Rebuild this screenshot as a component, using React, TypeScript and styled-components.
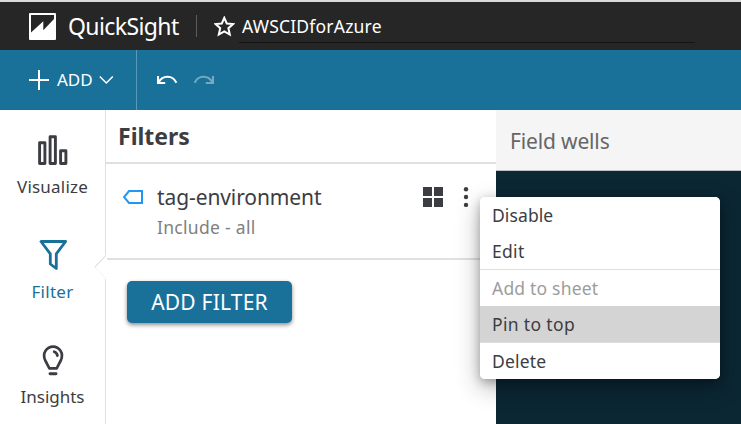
import React from "react";
import styled, { createGlobalStyle } from "styled-components";

const GlobalStyle = createGlobalStyle`
  * { box-sizing: border-box; }
  body { margin: 0; background: #fff; }
  #root { font-family: "Noto Sans", "Open Sans", sans-serif; }
`;

const Page = styled.div`
  width: 741px;
  height: 424px;
  overflow: hidden;
  display: flex;
  flex-direction: column;
  background: #fff;
`;

const Text = styled.span<{ $size: number; $spacing?: number; $color?: string; $weight?: number }>`
  display: block;
  font-size: ${(p) => p.$size}px;
  letter-spacing: ${(p) => p.$spacing ?? 0}px;
  color: ${(p) => p.$color ?? "#3c3d42"};
  font-weight: ${(p) => p.$weight ?? 400};
  line-height: 24px;
  white-space: nowrap;
`;

const Header = styled.header`
  display: flex;
  height: 50px;
  flex: none;
  padding-left: 29px;
  background: #262626;
  border-top: 2px solid #d9dadb;
`;

const Logo = styled.svg`
  margin-top: 11px;
  flex: none;
`;

const Brand = styled.div`
  width: 140px;
  padding: 12px 0 0 12px;
`;

const HeaderRule = styled.div`
  width: 1px;
  height: 22px;
  margin: 13px 17px 0 0;
  background: #5c5c5c;
`;

const Star = styled.svg`
  margin-top: 14px;
  flex: none;
`;

const AnalysisName = styled.div`
  width: 456px;
  height: 41px;
  margin-left: 4px;
  padding: 12px 0 0 3px;
  border-bottom: 1px solid #141414;
`;

const Toolbar = styled.div`
  display: flex;
  height: 60px;
  flex: none;
  background: #19719a;
`;

const AddMenu = styled.div`
  display: flex;
  align-items: center;
  width: 137px;
  padding-left: 29px;
  border-right: 1px solid #5a9ab7;
`;

const AddLabel = styled.div`
  width: 50px;
  padding-left: 8px;
`;

const History = styled.div`
  display: flex;
  align-items: center;
  gap: 15px;
  padding-left: 20px;
`;

const Body = styled.div`
  display: flex;
  flex: 1;
  min-height: 0;
`;

const Nav = styled.nav`
  position: relative;
  width: 106px;
  flex: none;
  border-right: 1px solid #e0e0e0;
`;

const NavItem = styled.div`
  display: flex;
  flex-direction: column;
  align-items: center;
  height: 105px;
  padding-top: 22px;
`;

const NavIcon = styled.svg`
  margin-bottom: 7px;
  flex: none;
`;

const Notch = styled.svg`
  position: absolute;
  left: 94px;
  top: 145px;
`;

const Panel = styled.section`
  width: 390px;
  flex: none;
`;

const PanelTitle = styled.div`
  height: 54px;
  padding: 14px 0 0 12px;
  border-bottom: 2px solid #e0e0e0;
`;

const FilterRow = styled.div`
  display: flex;
  height: 96px;
  border-bottom: 2px solid #e0e0e0;
  padding: 21px 0 0 17px;
`;

const FilterInfo = styled.div`
  width: 279px;
  padding-left: 13px;
`;

const FilterIcon = styled.svg<{ $top: number; $left?: number }>`
  margin: ${(p) => p.$top}px 0 0 ${(p) => p.$left ?? 0}px;
  flex: none;
`;

const FilterDetail = styled.div`
  padding-top: 6px;
`;

const AddFilter = styled.button`
  display: flex;
  align-items: center;
  justify-content: center;
  width: 165px;
  height: 42px;
  margin: 21px 0 0 21px;
  padding: 0;
  border: 0;
  border-radius: 5px;
  background: #19719a;
  font-family: inherit;
  box-shadow: 0 2px 4px rgba(0, 0, 0, 0.45);
`;

const Canvas = styled.main`
  flex: 1;
  background: #0b2733;
`;

const FieldWells = styled.div`
  height: 61px;
  padding: 19px 0 0 14px;
  background: #f5f5f5;
  border-bottom: 1px solid #bfc2c3;
`;

const Menu = styled.div`
  position: absolute;
  left: 480px;
  top: 197px;
  width: 240px;
  height: 182px;
  overflow: hidden;
  border-radius: 5px;
  background: #fff;
`;

const MenuShadow = styled.div`
  position: absolute;
  left: 480px;
  top: 197px;
  width: 240px;
  height: 182px;
  border-radius: 5px;
  box-shadow: 0 8px 24px rgba(0, 0, 0, 0.3), 0 3px 10px rgba(0, 0, 0, 0.25);
`;

const MenuItem = styled.div<{ $height: number; $active?: boolean; $ruled?: boolean }>`
  display: flex;
  align-items: center;
  height: ${(p) => p.$height}px;
  padding-left: 12px;
  background: ${(p) => (p.$active ? "#d4d4d4" : "#fff")};
  border-bottom: ${(p) => (p.$ruled ? "1px solid #dedede" : "0")};
`;

const MENU = [
  { label: "Disable", height: 36, spacing: 0.1 },
  { label: "Edit", height: 37, ruled: true, spacing: 0.3 },
  { label: "Add to sheet", height: 36, disabled: true, spacing: 0.2 },
  { label: "Pin to top", height: 37, active: true, ruled: true, spacing: 0.35 },
  { label: "Delete", height: 36, spacing: 0.2 },
];

export default function App() {
  return (
    <Page>
      <GlobalStyle />
      <Header>
        <Logo width="27" height="27" viewBox="0 0 27 27">
          <rect width="27" height="27" rx="1" fill="#fff" />
          <path d="M2 2H25V6L14.3 17.2V8.2L2 19.5Z" fill="#262626" />
        </Logo>
        <Brand>
          <Text $size={23} $spacing={-0.6} $color="#fff">QuickSight</Text>
        </Brand>
        <HeaderRule />
        <Star width="21" height="21" viewBox="0 0 21 21">
          <path
            d="M10.3 1.8 12.8 7.5 19.1 8.1 14.4 12.2 15.8 18.5 10.3 15.3 4.8 18.5 6.2 12.2 1.5 8.1 7.8 7.5Z"
            fill="none"
            stroke="#fff"
            strokeWidth="2"
          />
        </Star>
        <AnalysisName>
          <Text $size={17.5} $spacing={0.2} $color="#fff">AWSCIDforAzure</Text>
        </AnalysisName>
      </Header>
      <Toolbar>
        <AddMenu>
          <svg width="20" height="20" viewBox="0 0 20 20">
            <path d="M10 0V20M0 10H20" stroke="#fff" strokeWidth="2" />
          </svg>
          <AddLabel>
            <Text $size={17} $color="#fff">ADD</Text>
          </AddLabel>
          <svg width="15" height="10" viewBox="0 0 15 10">
            <path d="M.8 1.5 7.3 8 13.8 1.5" fill="none" stroke="#fff" strokeWidth="1.5" />
          </svg>
        </AddMenu>
        <History>
          <svg width="21" height="10" viewBox="0 0 21 10">
            <path d="M1 1V8H8.2M1.5 7.5C5.5.2 15.5-.5 19.4 7.8" fill="none" stroke="#fff" strokeWidth="2.1" />
          </svg>
          <svg width="21" height="10" viewBox="0 0 21 10">
            <path d="M20 1V8H12.8M19.5 7.5C15.5.2 5.5-.5 1.6 7.8" fill="none" stroke="#75a9c2" strokeWidth="2.1" />
          </svg>
        </History>
      </Toolbar>
      <Body>
        <Nav>
          <NavItem>
            <NavIcon width="32" height="36" viewBox="0 0 32 36">
              <path d="M2.6 10.8H7.9V31.5H2.6ZM13.1 4.8H18.4V31.5H13.1ZM23.6 18.8H28.9V31.5H23.6Z" fill="none" stroke="#3c3d42" strokeWidth="2.9" strokeLinejoin="round" />
            </NavIcon>
            <Text $size={17} $spacing={0.2}>Visualize</Text>
          </NavItem>
          <NavItem>
            <NavIcon width="32" height="36" viewBox="0 0 32 36">
              <path d="M4 4.5H28.6L19.3 16.8V31.5L13.3 27V16.8Z" fill="none" stroke="#19719a" strokeWidth="2.8" strokeLinejoin="round" />
            </NavIcon>
            <Text $size={17} $spacing={0.3} $color="#19719a">Filter</Text>
          </NavItem>
          <NavItem>
            <NavIcon width="32" height="36" viewBox="0 0 32 36">
              <g fill="none" stroke="#3c3d42" strokeLinecap="round">
                <path d="M12 26.4 7.6 18.5C3.6 11 9.5 4.6 16 4.6S28.4 11 24.4 18.5L20 26.4Z" transform="translate(1.3 0) scale(.92 1)" strokeWidth="2.9" strokeLinejoin="round" />
                <path d="M13 31.7H19" strokeWidth="2.9" />
                <path d="M17.2 9.8Q20 10.9 20.4 13.5" strokeWidth="2.8" />
              </g>
            </NavIcon>
            <Text $size={17}>Insights</Text>
          </NavItem>
          <Notch width="13" height="24" viewBox="0 0 13 24">
            <path d="M11 0H13V24H11Z" fill="#fff" />
            <path d="M12 .5.8 12.2" fill="none" stroke="#d2d2d2" />
            <path d="M.8 12.2 11.5 23" fill="none" stroke="#f1f1f1" />
          </Notch>
        </Nav>
        <Panel>
          <PanelTitle>
            <Text $size={23} $weight={700}>Filters</Text>
          </PanelTitle>
          <FilterRow>
            <FilterIcon $top={5} width="21" height="14" viewBox="0 0 21 14">
              <path d="M6 1H19V13H6L1 7Z" fill="none" stroke="#2196f3" strokeWidth="2" />
            </FilterIcon>
            <FilterInfo>
              <Text $size={21} $spacing={-0.1}>tag-environment</Text>
              <FilterDetail>
                <Text $size={17.5} $spacing={0.3} $color="#808080">Include - all</Text>
              </FilterDetail>
            </FilterInfo>
            <FilterIcon $top={2} width="20" height="20" viewBox="0 0 20 20">
              <path d="M0 0H9V9H0ZM11 0H20V9H11ZM0 11H9V20H0ZM11 11H20V20H11Z" fill="#3c3d42" />
            </FilterIcon>
            <FilterIcon $top={2} $left={20} width="6" height="21" viewBox="0 0 6 21">
              <g fill="#3c3d42">
                <circle cx="3" cy="2.2" r="2.2" />
                <circle cx="3" cy="10" r="2.2" />
                <circle cx="3" cy="17.9" r="2.2" />
              </g>
            </FilterIcon>
          </FilterRow>
          <AddFilter>
            <Text $size={21} $spacing={0.2} $color="#fff">ADD FILTER</Text>
          </AddFilter>
        </Panel>
        <Canvas>
          <FieldWells>
            <Text $size={21} $spacing={-0.15} $color="#666">Field wells</Text>
          </FieldWells>
        </Canvas>
      </Body>
      <MenuShadow />
      <Menu>
        {MENU.map((m) => (
          <MenuItem key={m.label} $height={m.height} $active={m.active} $ruled={m.ruled}>
            <Text $size={17.5} $spacing={m.spacing} $color={m.disabled ? "#9c9c9c" : undefined}>
              {m.label}
            </Text>
          </MenuItem>
        ))}
      </Menu>
    </Page>
  );
}
